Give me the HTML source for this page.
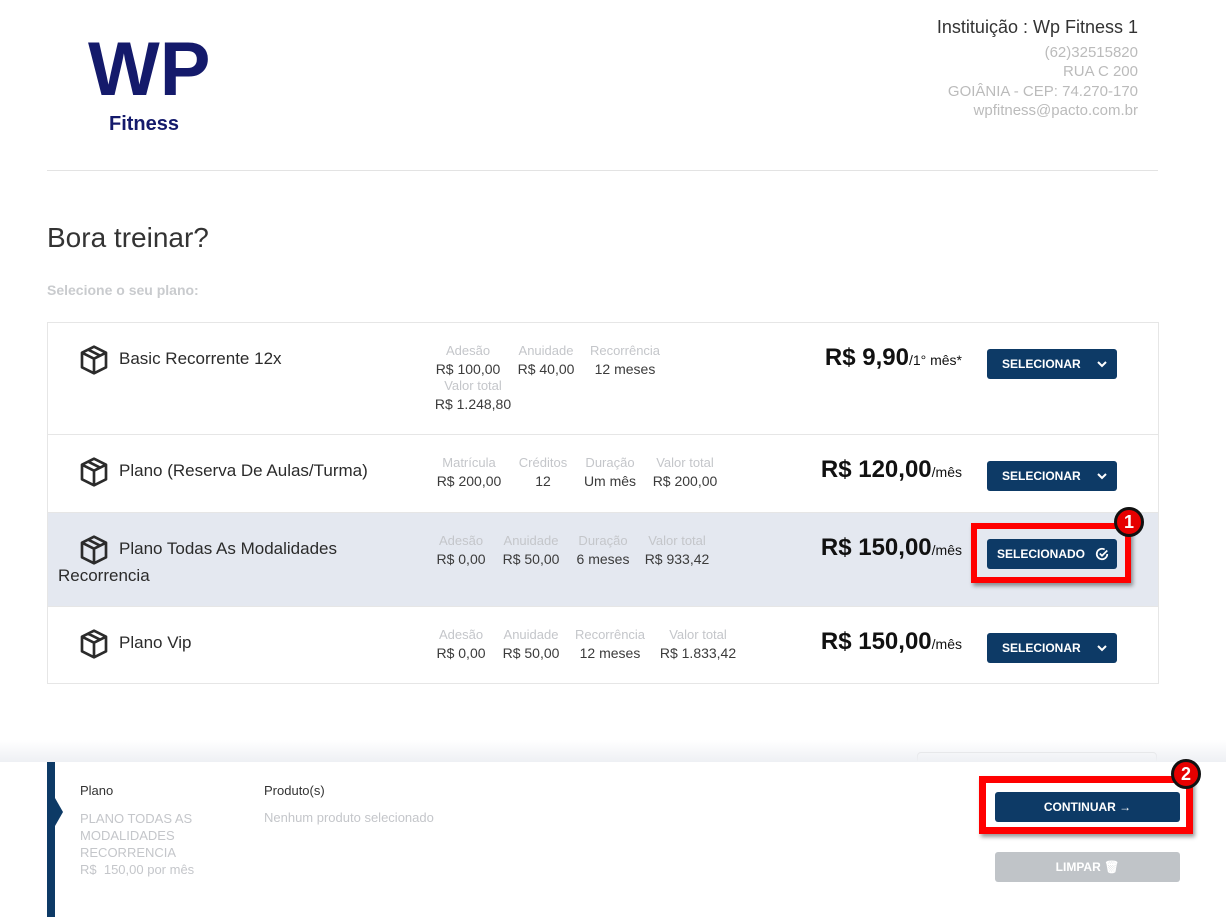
<!DOCTYPE html>
<html><head><meta charset="utf-8"><style>
*{margin:0;padding:0;box-sizing:border-box}
body{width:1226px;height:917px;background:#fff;font-family:"Liberation Sans",sans-serif;position:relative;overflow:hidden;color:#222}
.a{position:absolute;white-space:nowrap}
.c{transform:translateX(-50%);text-align:center}
.lb{color:#c4c6ca;font-size:13px}
.vl{color:#3b3b3b;font-size:14px}
.row{position:absolute;left:47px;width:1112px;border:1px solid #e6e6e6;background:#fff}
.name{font-size:17px;color:#2b2b2b}
.price{font-size:24px;font-weight:bold;color:#111;text-align:right;right:264px}
.price small{font-size:14px;font-weight:normal}
.btn{position:absolute;left:987px;width:130px;height:30px;background:#0d3a66;border-radius:3px;color:#fff;font-size:12px;font-weight:bold;line-height:30px;padding-left:15px}
.btn .ch{position:absolute;right:10px;top:11px}
.badge{position:absolute;width:30px;height:30px;border-radius:50%;background:#e60000;border:3px solid #111;color:#fff;font-weight:bold;font-size:18px;text-align:center;line-height:24px}
</style></head><body>
<div class="a" style="left:88px;top:32px;font-size:76px;font-weight:bold;color:#141a6b;line-height:1">WP</div>
<div class="a" style="left:109px;top:113px;font-size:20px;font-weight:bold;color:#141a6b">Fitness</div>
<div class="a" style="right:88px;top:17px;font-size:18px;color:#333">Instituição : Wp Fitness 1</div>
<div class="a" style="right:88px;top:43px;font-size:15px;color:#bbb;text-align:right;line-height:19.3px">(62)32515820<br>RUA C 200<br>GOIÂNIA - CEP: 74.270-170<br>wpfitness@pacto.com.br</div>
<div class="a" style="left:47px;top:170px;width:1111px;height:1px;background:#e3e3e3"></div>
<div class="a" style="left:47px;top:222px;font-size:28px;color:#333">Bora treinar?</div>
<div class="a" style="left:47px;top:282px;font-size:14px;font-weight:bold;color:#c9cbce">Selecione o seu plano:</div>

<div class="row" style="top:322px;height:113px"></div>
<div class="row" style="top:434px;height:79px"></div>
<div class="row" style="top:512px;height:95px;background:#e4e8f0"></div>
<div class="row" style="top:606px;height:78px"></div>

<svg class="a" style="left:78px;top:344px" width="32" height="32" viewBox="0 0 24 24" fill="none" stroke="#2b2b2b" stroke-width="2" stroke-linejoin="round"><path d="M12 2 21 6.5v11L12 22 3 17.5v-11z M3 6.5 12 11l9-4.5 M12 11v11 M7.5 4.2l9 4.5"/></svg>
<svg class="a" style="left:78px;top:456px" width="32" height="32" viewBox="0 0 24 24" fill="none" stroke="#2b2b2b" stroke-width="2" stroke-linejoin="round"><path d="M12 2 21 6.5v11L12 22 3 17.5v-11z M3 6.5 12 11l9-4.5 M12 11v11 M7.5 4.2l9 4.5"/></svg>
<svg class="a" style="left:78px;top:534px" width="32" height="32" viewBox="0 0 24 24" fill="none" stroke="#2b2b2b" stroke-width="2" stroke-linejoin="round"><path d="M12 2 21 6.5v11L12 22 3 17.5v-11z M3 6.5 12 11l9-4.5 M12 11v11 M7.5 4.2l9 4.5"/></svg>
<svg class="a" style="left:78px;top:628px" width="32" height="32" viewBox="0 0 24 24" fill="none" stroke="#2b2b2b" stroke-width="2" stroke-linejoin="round"><path d="M12 2 21 6.5v11L12 22 3 17.5v-11z M3 6.5 12 11l9-4.5 M12 11v11 M7.5 4.2l9 4.5"/></svg>

<div class="a name" style="left:119px;top:349px">Basic Recorrente 12x</div>
<div class="a name" style="left:119px;top:461px">Plano (Reserva De Aulas/Turma)</div>
<div class="a name" style="left:119px;top:539px">Plano Todas As Modalidades</div>
<div class="a name" style="left:58px;top:566px">Recorrencia</div>
<div class="a name" style="left:119px;top:633px">Plano Vip</div>

<div class="a c lb" style="left:468px;top:343px">Adesão</div><div class="a c vl" style="left:468px;top:361px">R$ 100,00</div>
<div class="a c lb" style="left:546px;top:343px">Anuidade</div><div class="a c vl" style="left:546px;top:361px">R$ 40,00</div>
<div class="a c lb" style="left:625px;top:343px">Recorrência</div><div class="a c vl" style="left:625px;top:361px">12 meses</div>
<div class="a c lb" style="left:473px;top:378px">Valor total</div><div class="a c vl" style="left:473px;top:396px">R$ 1.248,80</div>
<div class="a c lb" style="left:469px;top:455px">Matrícula</div><div class="a c vl" style="left:469px;top:473px">R$ 200,00</div>
<div class="a c lb" style="left:543px;top:455px">Créditos</div><div class="a c vl" style="left:543px;top:473px">12</div>
<div class="a c lb" style="left:610px;top:455px">Duração</div><div class="a c vl" style="left:610px;top:473px">Um mês</div>
<div class="a c lb" style="left:685px;top:455px">Valor total</div><div class="a c vl" style="left:685px;top:473px">R$ 200,00</div>
<div class="a c lb" style="left:461px;top:533px">Adesão</div><div class="a c vl" style="left:461px;top:551px">R$ 0,00</div>
<div class="a c lb" style="left:531px;top:533px">Anuidade</div><div class="a c vl" style="left:531px;top:551px">R$ 50,00</div>
<div class="a c lb" style="left:603px;top:533px">Duração</div><div class="a c vl" style="left:603px;top:551px">6 meses</div>
<div class="a c lb" style="left:677px;top:533px">Valor total</div><div class="a c vl" style="left:677px;top:551px">R$ 933,42</div>
<div class="a c lb" style="left:461px;top:627px">Adesão</div><div class="a c vl" style="left:461px;top:645px">R$ 0,00</div>
<div class="a c lb" style="left:531px;top:627px">Anuidade</div><div class="a c vl" style="left:531px;top:645px">R$ 50,00</div>
<div class="a c lb" style="left:610px;top:627px">Recorrência</div><div class="a c vl" style="left:610px;top:645px">12 meses</div>
<div class="a c lb" style="left:698px;top:627px">Valor total</div><div class="a c vl" style="left:698px;top:645px">R$ 1.833,42</div>

<div class="a price" style="top:344px">R$ 9,90<small>/1° mês*</small></div>
<div class="a price" style="top:456px">R$ 120,00<small>/mês</small></div>
<div class="a price" style="top:534px">R$ 150,00<small>/mês</small></div>
<div class="a price" style="top:628px">R$ 150,00<small>/mês</small></div>

<div class="btn" style="top:349px">SELECIONAR<svg class="ch" width="10" height="8" viewBox="0 0 10 8" fill="none" stroke="#fff" stroke-width="2"><path d="M1 2l4 4 4-4"/></svg></div>
<div class="btn" style="top:461px">SELECIONAR<svg class="ch" width="10" height="8" viewBox="0 0 10 8" fill="none" stroke="#fff" stroke-width="2"><path d="M1 2l4 4 4-4"/></svg></div>
<div class="btn" style="top:539px;padding-left:10px">SELECIONADO<svg style="position:absolute;right:8px;top:8px" width="14" height="14" viewBox="0 0 16 16" fill="none" stroke="#fff" stroke-width="2"><path d="M14 8a6 6 0 1 1-3-5.2"/><path d="M5.5 7.5 8 10l6-6"/></svg></div>
<div class="btn" style="top:633px">SELECIONAR<svg class="ch" width="10" height="8" viewBox="0 0 10 8" fill="none" stroke="#fff" stroke-width="2"><path d="M1 2l4 4 4-4"/></svg></div>

<div class="a" style="left:971px;top:523px;width:160px;height:60px;border:6px solid #f00;box-shadow:2px 3px 4px rgba(0,0,0,.4)"></div>
<div class="badge" style="left:1114px;top:507px">1</div>

<div class="a" style="left:917px;top:752px;width:240px;height:20px;border:1px solid #ddd;border-radius:4px"></div>
<div class="a" style="left:0;top:740px;width:1226px;height:22px;background:linear-gradient(#fff0,#eef0f4)"></div>
<div class="a" style="left:0;top:762px;width:1226px;height:155px;background:#fff"></div>
<div class="a" style="left:47px;top:762px;width:8px;height:155px;background:#0d3a66"></div>
<div class="a" style="left:55px;top:798px;width:0;height:0;border-top:14px solid transparent;border-bottom:14px solid transparent;border-left:8px solid #0d3a66"></div>
<div class="a" style="left:80px;top:783px;font-size:13px;color:#333">Plano</div>
<div class="a" style="left:80px;top:810px;font-size:13px;color:#c4c6ca;line-height:17px">PLANO TODAS AS<br>MODALIDADES<br>RECORRENCIA<br>R$&nbsp; 150,00 por mês</div>
<div class="a" style="left:264px;top:783px;font-size:13px;color:#333">Produto(s)</div>
<div class="a" style="left:264px;top:810px;font-size:13px;color:#c4c6ca">Nenhum produto selecionado</div>

<div class="a" style="left:995px;top:792px;width:185px;height:30px;background:#0d3a66;border-radius:3px;color:#fff;font-size:12px;font-weight:bold;text-align:center;line-height:30px">CONTINUAR →</div>
<div class="a" style="left:995px;top:852px;width:185px;height:30px;background:#c0c4c8;border-radius:3px;color:#fff;font-size:12px;font-weight:bold;text-align:center;line-height:30px">LIMPAR 🗑</div>
<div class="a" style="left:979px;top:776px;width:214px;height:58px;border:7px solid #f00;box-shadow:2px 3px 4px rgba(0,0,0,.4)"></div>
<div class="badge" style="left:1171px;top:759px">2</div>
</body></html>
